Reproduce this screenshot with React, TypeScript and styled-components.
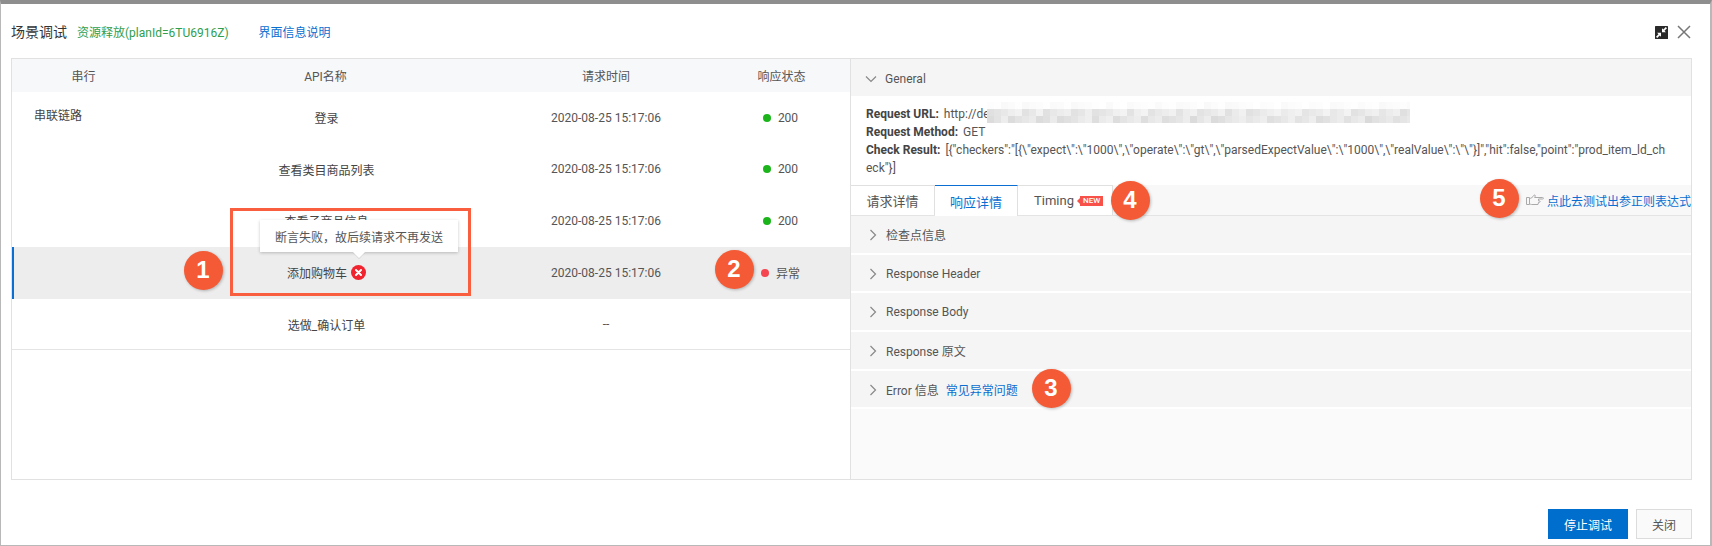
import React from "react";
import styled, { createGlobalStyle } from "styled-components";

const Global = createGlobalStyle`
  html, body { margin: 0; padding: 0; background: #fff; }
  * { box-sizing: border-box; }
  body { font-family: Roboto, "Noto Sans CJK SC", sans-serif; font-size: 12px; color: #555; }
`;

const Modal = styled.div`
  position: relative;
  width: 1712px;
  height: 546px;
  background: #fff;
  border-top: 4px solid #8e8e8e;
  border-left: 1px solid #b8b8b8;
  border-right: 2px solid #b8b8b8;
  border-bottom: 1px solid #b8b8b8;
  display: flex;
  flex-direction: column;
  overflow: hidden;
`;

const Header = styled.div`
  height: 54px;
  padding: 0 19px 0 10px;
  display: flex;
  align-items: center;
`;
const Title = styled.span`
  font-size: 14px;
  color: #333;
`;
const Status = styled.span`
  margin-left: 10px;
  color: #2f9e4f;
`;
const HeaderLink = styled.a`
  margin-left: 30px;
  color: #0a6fd0;
`;
const HeaderIcons = styled.div`
  margin-left: auto;
  padding-top: 2px;
  display: flex;
  align-items: center;
  gap: 9px;
`;

const Panel = styled.div`
  margin: 0 18px 0 10px;
  height: 422px;
  border: 1px solid #e1e1e1;
  display: grid;
  grid-template-columns: 839px 1fr;
`;

const columns = "143px 341px 220px 131px";

const LeftPane = styled.div`
  border-right: 1px solid #e1e1e1;
  position: relative;
`;
const TableRow = styled.div<{ $active?: boolean; $last?: boolean }>`
  height: ${(p) => (p.$active ? 52 : 51.6)}px;
  display: grid;
  grid-template-columns: ${columns};
  align-items: center;
  text-align: center;
  background: ${(p) => (p.$active ? "#ededed" : "#fff")};
  box-shadow: ${(p) => (p.$active ? "inset 2px 0 0 #0a6fd0" : "none")};
  border-bottom: ${(p) => (p.$last ? "1px solid #e4e4e4" : "none")};
`;
const HeadRow = styled.div`
  height: 33px;
  background: #f7f8fa;
  display: grid;
  grid-template-columns: ${columns};
  align-items: center;
  text-align: center;
  color: #555;
`;
const GroupCell = styled.div`
  text-align: left;
  padding: 0 0 6px 22px;
  color: #444;
`;
const NameCell = styled.div`
  position: relative;
  display: flex;
  justify-content: center;
  align-items: center;
  gap: 4px;
  padding-left: 2px;
  color: #444;
`;
const StatusCell = styled.div`
  display: flex;
  align-items: center;
  justify-content: center;
  gap: 7px;
  padding-right: 2px;
  color: #555;
`;
const Dot = styled.i<{ $color: string }>`
  width: 8px;
  height: 8px;
  border-radius: 50%;
  background: ${(p) => p.$color};
`;
const RedBox = styled.div`
  position: absolute;
  left: 218px;
  top: 149px;
  width: 241px;
  height: 88px;
  border: 3px solid #f95f3e;
  pointer-events: none;
`;
const Tooltip = styled.div`
  position: absolute;
  left: 248px;
  top: 161px;
  width: 198px;
  height: 32px;
  background: #fff;
  box-shadow: 0 1px 3px rgba(0, 0, 0, 0.22);
  color: #555;
  display: flex;
  align-items: center;
  justify-content: center;
  &::after {
    content: "";
    position: absolute;
    left: 93px;
    bottom: -6px;
    width: 12px;
    height: 12px;
    background: #fff;
    transform: rotate(45deg) scale(0.72);
    box-shadow: 1px 1px 1px rgba(0, 0, 0, 0.08);
  }
`;

const RightPane = styled.div`
  display: flex;
  flex-direction: column;
  min-width: 0;
  background: #fafafa;
`;
const GeneralBar = styled.div`
  height: 37px;
  padding: 2px 0 0 14px;
  background: #f5f5f5;
  display: flex;
  align-items: center;
  gap: 8px;
  color: #555;
`;
const Info = styled.div`
  background: #fff;
  padding: 9px 14px 0 15px;
  height: 89px;
  line-height: 18px;
  color: #555;
  word-break: break-all;
`;
const InfoLine = styled.div`
  position: relative;
`;
const InfoKey = styled.b`
  color: #444;
  font-weight: 700;
  margin-right: 5px;
`;
const Mosaic = styled.svg`
  position: absolute;
  left: 121px;
  top: -3px;
`;
const Tabs = styled.div`
  height: 31px;
  display: flex;
  background: #f8f8f8;
  border-bottom: 1px solid #e4e4e4;
  align-items: stretch;
`;
const Tab = styled.div<{ $active?: boolean; $w: number }>`
  width: ${(p) => p.$w}px;
  margin-bottom: ${(p) => (p.$active ? -1 : 0)}px;
  background: #fff;
  display: flex;
  align-items: center;
  justify-content: center;
  font-size: 13px;
  color: ${(p) => (p.$active ? "#0a6fd0" : "#555")};
  border-right: 1px solid #e0e0e0;
  border-top: 1px solid ${(p) => (p.$active ? "#0a6fd0" : "#e0e0e0")};
`;
const TimingTab = styled(Tab)`
  justify-content: flex-start;
  padding-left: 16px;
`;
const NewTag = styled.span`
  position: relative;
  background: #f85149;
  color: #fff;
  font-size: 8px;
  line-height: 10px;
  font-weight: 500;
  padding: 0 3px;
  margin-left: 6px;
  &::before {
    content: "";
    position: absolute;
    left: -3px;
    top: 2px;
    border: 3px solid transparent;
    border-left: 0;
    border-right: 3px solid #f85149;
  }
`;
const TabHint = styled.a`
  margin-left: auto;
  display: flex;
  align-items: center;
  gap: 3px;
  color: #0a6fd0;
`;
const AccRow = styled.div`
  height: 38.7px;
  background: #f5f5f5;
  border-bottom: 2px solid #fff;
  display: flex;
  align-items: center;
  padding: 1px 0 0 16px;
  gap: 7px;
  color: #555;
`;
const AccLink = styled.a`
  color: #0a6fd0;
`;

const Footer = styled.div`
  flex: 1;
  display: flex;
  justify-content: flex-end;
  align-items: flex-start;
  gap: 8px;
  padding: 29px 18px 0 0;
`;
const PrimaryButton = styled.button`
  width: 80px;
  height: 30px;
  border: 0;
  background: #006ecc;
  color: #fff;
  font: inherit;
`;
const GhostButton = styled.button`
  width: 56px;
  height: 30px;
  border: 1px solid #dcdcdc;
  background: #fafafa;
  color: #555;
  font: inherit;
`;
const Badge = styled.div<{ $x: number; $y: number }>`
  position: absolute;
  left: ${(p) => p.$x - 19.5 - 1}px;
  top: ${(p) => p.$y - 19.5 - 4}px;
  width: 39px;
  height: 39px;
  border-radius: 50%;
  background: #f45a35;
  color: #fff;
  font-family: "Liberation Sans", sans-serif;
  font-weight: 700;
  font-size: 24px;
  display: flex;
  align-items: center;
  justify-content: center;
  box-shadow: 1px 1px 3px rgba(0, 0, 0, 0.25);
`;

const Chevron = ({ down }: { down?: boolean }) => (
  <svg width="12" height="12" viewBox="0 0 12 12" fill="none" stroke="#888" strokeWidth="1.2">
    {down ? <path d="M1 3.5 6 8.5 11 3.5" /> : <path d="M3.5 1 8.5 6 3.5 11" />}
  </svg>
);

const ErrorIcon = () => (
  <svg width="15" height="15" viewBox="0 0 15 15">
    <circle cx="7.5" cy="7.5" r="7.5" fill="#f0232e" />
    <path d="M5 5 10 10M10 5 5 10" stroke="#fff" strokeWidth="2" strokeLinecap="round" />
  </svg>
);

const ShrinkIcon = () => (
  <svg width="13" height="13" viewBox="0 0 13 13">
    <rect width="13" height="13" rx="0.5" fill="#2a2a2a" />
    <path d="M7 6.2V2.2l1.3 1.3L10.8 1l1.2 1.2L9.5 4.7 10.9 6.2zM6 6.8v4L4.7 9.5 2.2 12 1 10.8l2.5-2.5L2.1 6.8z" fill="#fff" />
  </svg>
);

const CloseIcon = () => (
  <svg width="14" height="14" viewBox="0 0 14 14" stroke="#777" strokeWidth="1.5">
    <path d="M1 1 13 13M13 1 1 13" />
  </svg>
);

const HandIcon = () => (
  <svg width="18" height="12" viewBox="0 0 18 12" fill="none" stroke="#aaa" strokeWidth="1">
    <path d="M.5 3.5h3v7h-3zM3.5 4.5C5 4.5 7 3 8 1.2c.6-.6 1.6 0 1.2 1L8.6 3.5h8c1.2 0 1.2 1.5 0 1.5h-4.2M12.5 5v1.8h1c.9 0 .9 1.5 0 1.5h-1M12.5 8.3v1.2h-.5M12 9.5v1H5.5c-.8 0-1.2-.5-2-.5" />
  </svg>
);

const shade = (i: number, base: number, spread: number) => {
  const v = (i * 37 + (i % 7) * 53 + (i % 3) * 29) % 100;
  const g = Math.round(base + (v / 100) * spread);
  return `rgb(${g},${g},${g})`;
};
const mosaicCols = Array.from({ length: 61 }, (_, i) => i);

const BlurMosaic = () => (
  <Mosaic width="423" height="21" viewBox="0 0 423 21">
    {mosaicCols.map((i) => (
      <React.Fragment key={i}>
        <rect x={i * 7} y={0} width={7} height={7} fill={shade(i + 3, 249, 6)} />
        <rect x={i * 7} y={7} width={7} height={7} fill={shade(i, 224, 20)} />
        <rect x={i * 7} y={14} width={7} height={7} fill={shade(i + 5, 218, 22)} />
      </React.Fragment>
    ))}
  </Mosaic>
);

const rows = [
  { group: "串联链路", name: "登录", time: "2020-08-25 15:17:06", code: "200", color: "#1bb51b" },
  { name: "查看类目商品列表", time: "2020-08-25 15:17:06", code: "200", color: "#1bb51b" },
  { name: "查看子商品信息", time: "2020-08-25 15:17:06", code: "200", color: "#1bb51b" },
  { name: "添加购物车", time: "2020-08-25 15:17:06", code: "异常", color: "#f5454f", active: true, error: true },
  { name: "选做_确认订单", time: "--", last: true },
];

const checkResult =
  '[{"checkers":"[{\\"expect\\":\\"1000\\",\\"operate\\":\\"gt\\",\\"parsedExpectValue\\":\\"1000\\",\\"realValue\\":\\"\\"}]","hit":false,"point":"prod_item_ld_ch';

export default function App() {
  return (
    <Modal>
      <Global />
      <Header>
        <Title>场景调试</Title>
        <Status>资源释放(planId=6TU6916Z)</Status>
        <HeaderLink>界面信息说明</HeaderLink>
        <HeaderIcons>
          <ShrinkIcon />
          <CloseIcon />
        </HeaderIcons>
      </Header>
      <Panel>
        <LeftPane>
          <HeadRow>
            <div>串行</div>
            <div>API名称</div>
            <div>请求时间</div>
            <div>响应状态</div>
          </HeadRow>
          {rows.map((r) => (
            <TableRow key={r.name} $active={r.active} $last={r.last}>
              <GroupCell>{r.group}</GroupCell>
              <NameCell>
                {r.name}
                {r.error && <ErrorIcon />}
              </NameCell>
              <div>{r.time}</div>
              {r.code ? (
                <StatusCell>
                  <Dot $color={r.color as string} />
                  {r.code}
                </StatusCell>
              ) : (
                <div />
              )}
            </TableRow>
          ))}
          <Tooltip>断言失败，故后续请求不再发送</Tooltip>
          <RedBox />
        </LeftPane>
        <RightPane>
          <GeneralBar>
            <Chevron down />
            General
          </GeneralBar>
          <Info>
            <InfoLine>
              <InfoKey>Request URL:</InfoKey>http://de
              <BlurMosaic />
            </InfoLine>
            <InfoLine>
              <InfoKey>Request Method:</InfoKey>GET
            </InfoLine>
            <InfoLine>
              <InfoKey>Check Result:</InfoKey>
              {checkResult}
              <br />
              {'eck"}]'}
            </InfoLine>
          </Info>
          <Tabs>
            <Tab $w={84}>请求详情</Tab>
            <Tab $w={83} $active>
              响应详情
            </Tab>
            <TimingTab $w={95}>
              Timing
              <NewTag>NEW</NewTag>
            </TimingTab>
            <TabHint>
              <HandIcon />
              点此去测试出参正则表达式
            </TabHint>
          </Tabs>
          <AccRow>
            <Chevron />
            检查点信息
          </AccRow>
          <AccRow>
            <Chevron />
            Response Header
          </AccRow>
          <AccRow>
            <Chevron />
            Response Body
          </AccRow>
          <AccRow>
            <Chevron />
            Response 原文
          </AccRow>
          <AccRow>
            <Chevron />
            Error 信息
            <AccLink>常见异常问题</AccLink>
          </AccRow>
        </RightPane>
      </Panel>
      <Footer>
        <PrimaryButton>停止调试</PrimaryButton>
        <GhostButton>关闭</GhostButton>
      </Footer>
      <Badge $x={203} $y={270}>1</Badge>
      <Badge $x={734} $y={269}>2</Badge>
      <Badge $x={1051} $y={388}>3</Badge>
      <Badge $x={1130} $y={200}>4</Badge>
      <Badge $x={1499} $y={198}>5</Badge>
    </Modal>
  );
}
